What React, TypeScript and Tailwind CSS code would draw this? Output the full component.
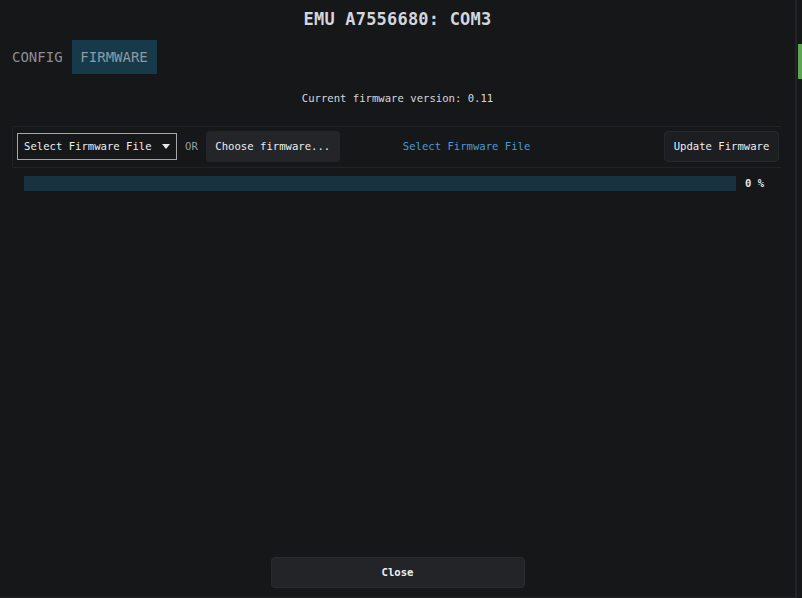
const mono = "font-['DejaVu_Sans_Mono','Liberation_Mono',monospace]";

export default function App() {
  return (
    <div className={`${mono} w-[802px] h-[598px] bg-[#161719] flex overflow-hidden`}>
      <div className="flex-1 flex flex-col border-b border-[#222428]">
        <div className="h-[40px] flex items-center justify-center">
          <h1 className="text-[17px] font-bold text-[#d2d6dc] tracking-[0.2px]">EMU A7556680: COM3</h1>
        </div>

        <div className="flex h-[34px]">
          <button className="pl-[12px] pr-[9px] text-[14px] text-[#8a8f95]">CONFIG</button>
          <button className="w-[85px] bg-[#173a4a] text-[14px] text-[#8a9aa2]">FIRMWARE</button>
        </div>

        <p className="mt-[17px] text-center text-[10.6px] text-[#d6d8da]">Current firmware version: 0.11</p>

        <div className="mt-[19px] ml-[12px] mr-[14px] h-[42px] flex items-center pl-[4px] pr-[2px] border-y border-l border-[#202226] rounded-l-[2px]">
          <div className="w-[160px] h-[27px] border border-[#a4a6a8] flex items-center justify-between pl-[6px] pr-[6px]">
            <span className="text-[10.6px] text-[#eceef0]">Select Firmware File</span>
            <svg width="8" height="5" viewBox="0 0 8 5"><path d="M0 0h8L4 5z" fill="#e6e8ea" /></svg>
          </div>
          <span className="ml-[8px] text-[10.6px] text-[#9a9ea2]">OR</span>
          <button className="ml-[8px] w-[134px] h-[31px] rounded-[4px] bg-[#232528] text-[10.6px] text-[#eceef0]">Choose firmware...</button>
          <span className="ml-[63px] text-[10.6px] text-[#4a9ad6]">Select Firmware File</span>
          <div className="flex-1" />
          <button className="w-[115px] h-[31px] rounded-[4px] bg-[#1c1e21] border border-[#26282c] text-[10.6px] text-[#eceef0]">Update Firmware</button>
        </div>

        <div className="mt-[8px] ml-[24px] flex items-center">
          <div className="w-[712px] h-[15px] bg-[#19323f]" />
          <span className="ml-[9px] text-[10.6px] font-bold text-[#e4e6e8]">0 %</span>
        </div>

        <div className="flex-1" />

        <div className="flex justify-center mb-[9px]">
          <button className="w-[254px] h-[31px] rounded-[4px] bg-[#232427] border border-[#2a2b2e] text-[10.6px] font-bold text-[#eceef0]">Close</button>
        </div>
      </div>

      <div className="w-[7px] border-l-2 border-[#222428] pl-[1px]">
        <div className="mt-[44px] h-[35px] bg-[#5da552]" />
      </div>
    </div>
  );
}
